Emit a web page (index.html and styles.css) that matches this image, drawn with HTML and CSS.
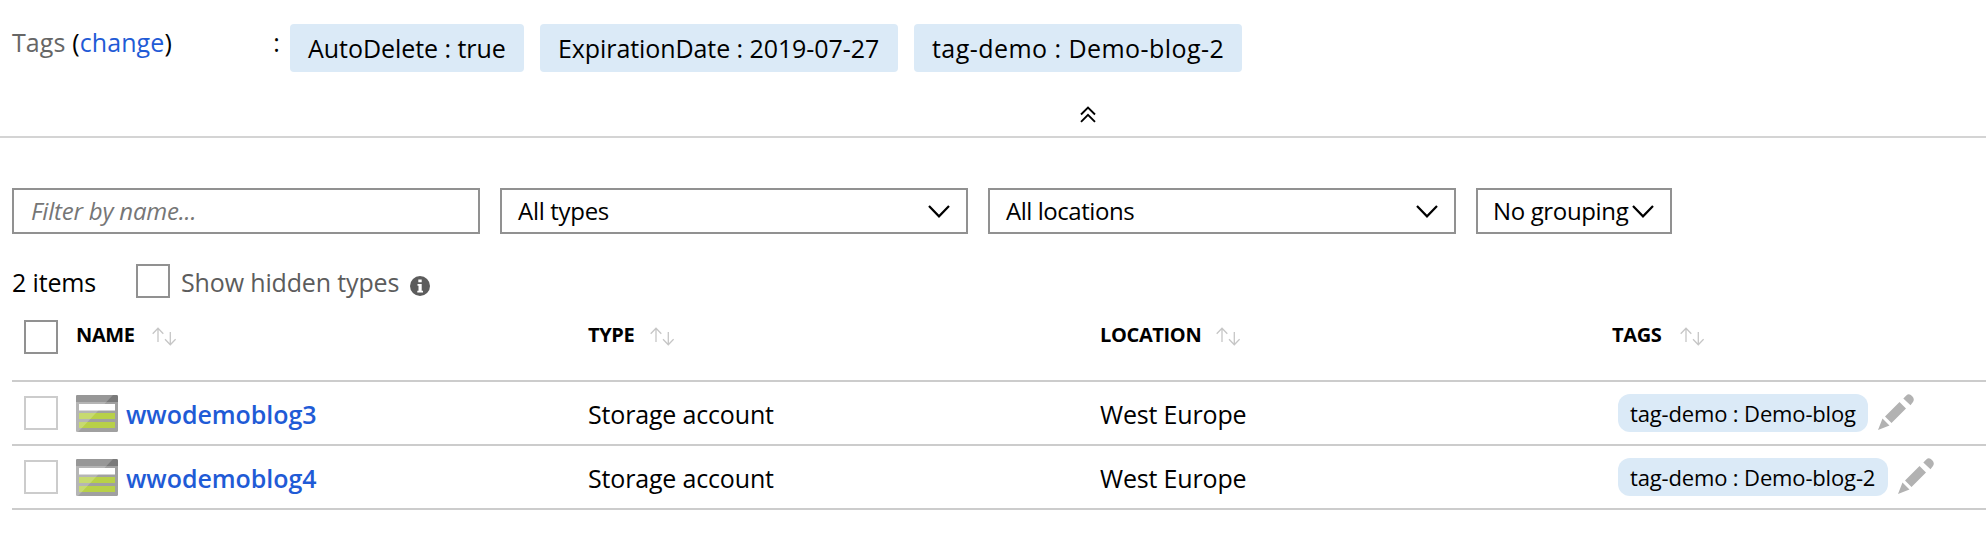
FILE: index.html
```
<!DOCTYPE html>
<html lang="en">
<head>
<meta charset="utf-8">
<title>Resource group</title>
<link rel="stylesheet" href="styles.css">
</head>
<body>
<svg class="defs" width="0" height="0" aria-hidden="true">
  <symbol id="sort" viewBox="0 0 24 19"><path d="M6 15V1.5M.7 6.700 6 1.200l5.300 5.500M18.300 5v12.500M13 12.200l5.300 5.500 5.300-5.500" fill="none" stroke="#c6c6c6" stroke-width="1.300"/></symbol>
  <symbol id="chevron" viewBox="0 0 22 13"><path d="M1 1l10 10.300L21 1" fill="none" stroke="#000" stroke-width="2.200"/></symbol>
  <symbol id="storage" viewBox="0 0 42 37">
    <rect width="42" height="37" rx="1.500" fill="#a0a0a0"/>
    <path d="M0 1.500Q0 0 1.500 0h39Q42 0 42 1.500V7H0z" fill="#7a7a7a"/>
    <path d="M3 9h36v6.500H3z" fill="#fff"/>
    <path d="M3 18h36v6H3zM3 27h36v6H3z" fill="#b8d048"/>
    <path d="M1.500 0H37L2 37H1.500Q0 37 0 35.500v-34Q0 0 1.500 0z" fill="#fff" opacity=".22"/>
  </symbol>
  <symbol id="pencil" viewBox="0 0 36 36">
    <path d="M0 36l4.500-11.500 7 7zM7 22.500 21.500 8l6.500 6.500L13.500 29zM25.300 4.500l3-3Q31-1 34 2t1 6l-2.500 3.300z" fill="#b2b2b2"/>
  </symbol>
</svg>
<section class="essentials">
  <div class="label"><span><span class="muted">Tags</span> (<a>change</a>)</span><span>:</span></div>
  <span class="tag auto">AutoDelete : true</span>
  <span class="tag date">ExpirationDate : 2019-07-27</span>
  <span class="tag demo">tag-demo : Demo-blog-2</span>
</section>
<div class="collapse"><svg width="16" height="17" viewBox="0 0 16 17"><path d="M1 8.500l7-7 7 7M1 15.800l7-7 7 7" fill="none" stroke="#000" stroke-width="1.900"/></svg></div>
<section class="filters">
  <div class="field search">Filter by name...</div>
  <div class="field">All types<svg width="22" height="13"><use href="#chevron"/></svg></div>
  <div class="field locations">All locations<svg width="22" height="13"><use href="#chevron"/></svg></div>
  <div class="field group">No grouping<svg width="22" height="13"><use href="#chevron"/></svg></div>
</section>
<section class="summary">
  <span class="count">2 items</span><i class="box"></i><span class="hidden-types">Show hidden types</span>
  <svg class="info" width="20" height="20" viewBox="0 0 20 20"><circle cx="10" cy="10" r="10" fill="#5c5c5c"/><path d="M8.300 3.500h3.400v2.800H8.300zM7.500 8h4.200v6.800H13v1.700H7.300v-1.700h1.200V9.700h-1z" fill="#fff"/></svg>
</section>
<main class="grid">
  <div class="row head">
    <div class="cell"><i class="box"></i><span class="h-name">NAME</span><svg width="24" height="19"><use href="#sort"/></svg></div>
    <div class="cell"><span class="h-type">TYPE</span><svg width="24" height="19"><use href="#sort"/></svg></div>
    <div class="cell"><span class="h-loc">LOCATION</span><svg width="24" height="19"><use href="#sort"/></svg></div>
    <div class="cell"><span class="h-tags">TAGS</span><svg width="24" height="19"><use href="#sort"/></svg></div>
  </div>
  <div class="row">
    <div class="cell"><i class="box light"></i><svg class="type-icon" width="42" height="37"><use href="#storage"/></svg><a class="name">wwodemoblog3</a></div>
    <div class="cell text">Storage account</div>
    <div class="cell text">West Europe</div>
    <div class="cell"><span class="pill">tag-demo : Demo-blog</span><svg class="edit" width="36" height="36"><use href="#pencil"/></svg></div>
  </div>
  <div class="row">
    <div class="cell"><i class="box light"></i><svg class="type-icon" width="42" height="37"><use href="#storage"/></svg><a class="name">wwodemoblog4</a></div>
    <div class="cell text">Storage account</div>
    <div class="cell text">West Europe</div>
    <div class="cell"><span class="pill wide">tag-demo : Demo-blog-2</span><svg class="edit" width="36" height="36"><use href="#pencil"/></svg></div>
  </div>
</main>
</body>
</html>
```
FILE: styles.css
```
* { box-sizing: border-box; }
body { margin: 0; height: 540px; overflow: hidden; background: #fff; color: #000; font: 25px "Open Sans", "Noto Sans", sans-serif; white-space: nowrap; }
svg { display: block; flex: none; }
.defs { position: absolute; }
a { color: #1f5bd6; }
.essentials { display: flex; gap: 16px; height: 88px; padding: 24px 0 0 12px; }
.label { display: flex; justify-content: space-between; width: 268px; margin-right: -6px; line-height: 37px; letter-spacing: .1px; }
.muted { color: #666; }
.tag { height: 48px; line-height: 49px; padding-left: 18px; background: #dbeaf7; border-radius: 4px; }
.auto { width: 234px; letter-spacing: -.05px; }
.date { width: 358px; letter-spacing: -.08px; }
.demo { width: 328px; letter-spacing: .45px; }
.collapse { height: 50px; padding: 18px 0 0 1080px; border-bottom: 2px solid #d4d4d4; }
.filters { display: flex; gap: 20px; padding: 50px 0 0 12px; font-size: 24px; }
.field { display: flex; align-items: center; justify-content: space-between; width: 468px; height: 46px; padding: 0 16px; border: 2px solid #919191; line-height: 40px; letter-spacing: -.3px; }
.search { padding-left: 17px; font-style: italic; color: #767676; letter-spacing: -.2px; }
.locations { letter-spacing: -.45px; }
.group { width: 196px; padding-left: 15px; letter-spacing: -.35px; }
.summary { display: flex; align-items: flex-start; height: 86px; padding: 30px 0 0 12px; line-height: 37px; letter-spacing: -.15px; }
.count { width: 124px; }
.box { flex: none; width: 34px; height: 34px; border: 2px solid #919191; }
.light { border-color: #ccc; }
.hidden-types { width: 229px; margin-left: 11px; color: #5c5c5c; }
.info { margin-top: 12px; }
.grid { margin-left: 12px; }
.row { display: grid; grid-template-columns: 576px 512px 512px 1fr; height: 64px; border-bottom: 2px solid #ccc; }
.head { height: 62px; font-size: 20px; font-weight: 700; line-height: 30px; }
.cell { display: flex; align-items: center; }
.head .cell { align-items: flex-start; }
.head .cell span { letter-spacing: -.35px; }
.head .cell svg { margin-top: 7px; }
.cell .box { margin: 0 18px 0 12px; }
.h-name { width: 76px; }
.h-type { width: 62px; }
.h-loc { width: 116px; }
.h-tags { width: 68px; }
.type-icon { margin-right: 8px; }
.name { font-weight: 600; padding-top: 2px; letter-spacing: -.05px; }
.text { padding-top: 2px; letter-spacing: -.17px; }
.pill { width: 250px; height: 38px; margin-left: 6px; padding-left: 12px; border-radius: 12px; background: #dbeaf7; font-size: 22px; line-height: 39px; letter-spacing: -.15px; }
.wide { width: 270px; }
.edit { margin: -2px 0 0 10px; }
```
